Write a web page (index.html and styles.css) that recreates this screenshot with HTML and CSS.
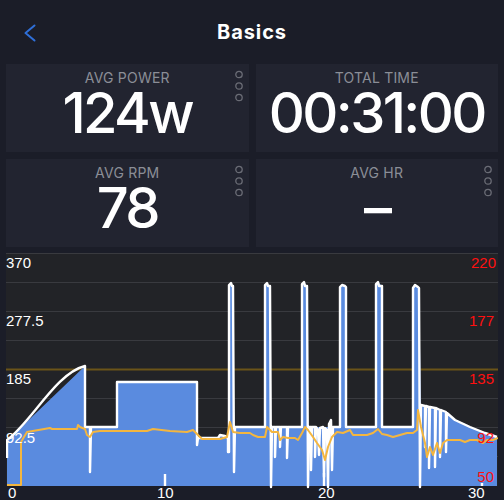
FILE: index.html
```html
<!DOCTYPE html>
<html lang="en">
<head>
  <meta charset="UTF-8" />
  <title>Basics</title>
  <meta name="viewport" content="width=device-width, initial-scale=1" />
  <link rel="stylesheet" href="styles.css">
</head>
<body>
  <div class="topbar">
    <div class="topbar-side">
      <a class="back" href="#" aria-label="Back">
        <svg width="12" height="18" viewBox="0 0 12 18" aria-hidden="true">
          <polyline points="10.5,1.5 1.5,9 10.5,16.5" />
        </svg>
      </a>
    </div>
    <h1 class="title">Basics</h1>
    <div class="topbar-side"></div>
  </div>

  <div class="stats">
    <div class="stat">
      <p class="stat-label">AVG POWER</p>
      <p class="stat-value">124w</p>
      <svg class="stat-menu" width="10" height="34" viewBox="0 0 10 34" aria-hidden="true">
        <circle cx="5" cy="4.5" r="3.2" /><circle cx="5" cy="16" r="3.2" /><circle cx="5" cy="27.5" r="3.2" />
      </svg>
    </div>
    <div class="stat">
      <p class="stat-label">TOTAL TIME</p>
      <p class="stat-value">00:31:00</p>
    </div>
    <div class="stat">
      <p class="stat-label">AVG RPM</p>
      <p class="stat-value">78</p>
      <svg class="stat-menu" width="10" height="34" viewBox="0 0 10 34" aria-hidden="true">
        <circle cx="5" cy="4.5" r="3.2" /><circle cx="5" cy="16" r="3.2" /><circle cx="5" cy="27.5" r="3.2" />
      </svg>
    </div>
    <div class="stat">
      <p class="stat-label">AVG HR</p>
      <p class="stat-value">–</p>
      <svg class="stat-menu" width="10" height="34" viewBox="0 0 10 34" aria-hidden="true">
        <circle cx="5" cy="4.5" r="3.2" /><circle cx="5" cy="16" r="3.2" /><circle cx="5" cy="27.5" r="3.2" />
      </svg>
    </div>
  </div>

  <!-- power / cadence chart, coordinates are page pixels -->
  <div class="chart">
    <svg width="492" height="247" viewBox="6 253 492 247">
      <rect class="plot-bg" x="6" y="253" width="492" height="233" />
      <g class="grid">
        <line x1="6" y1="253.5" x2="498" y2="253.5" />
        <line x1="6" y1="282.5" x2="498" y2="282.5" />
        <line x1="6" y1="311.5" x2="498" y2="311.5" />
        <line x1="6" y1="340.5" x2="498" y2="340.5" />
        <line x1="6" y1="398.5" x2="498" y2="398.5" />
        <line x1="6" y1="427.5" x2="498" y2="427.5" />
        <line x1="6" y1="456.5" x2="498" y2="456.5" />
      </g>
      <line class="ftp" x1="6" y1="369.5" x2="498" y2="369.5" />

      <path class="power-fill" d="M7,486 L7,440 L12,436 L85,366 L85,427 L117,427 L117,382 L197,382 L197,438 L218,438 L220,435 L225,436 L228,438 L229,452 L229,285 L231,283 L233,286 L234,427 L265,427 L265,285 L267,283 L270,286 L271,427 L302,427 L302,284 L304,282 L307,286 L308,427 L340,427 L340,287 L342,285 L346,287 L346,427 L376,427 L376,284 L378,282 L382,286 L382,427 L413,427 L413,288 L415,285 L419,288 L421,405 L435,408 L446,412 L455,420 L470,427 L485,433 L497,437 L497,486 Z" />

      <path class="power-line" d="M7,458 L7,440 C31,423 56,373 85,366 L85,427 L90,427 L90,472 L91,427 L117,427 L117,382 L197,382 L197,445 L198,438 L218,438 L220,435 L225,436 L228,438 L228,452 L229,452 L229,285 L231,283 L232,286 L233,286 L234,472 L235,427 L265,427 L265,285 L267,283 L268,286 L270,286 L271,487 L272,427 L275,427 L275,457 L276,427 L280,427 L280,447 L281,427 L287,427 L287,458 L288,427 L302,427 L302,284 L304,282 L305,286 L307,286 L308,487 L309,427 L311,427 L311,470 L312,427 L315,427 L315,457 L316,427 L318,430 L319,455 L320,428 L323,427 L324,477 L325,428 L327,430 L328,487 L329,424 L331,420 L332,470 L333,427 L340,427 L340,287 L342,285 L345,286 L346,287 L346,427 L376,427 L376,284 L378,282 L379,286 L382,286 L382,427 L413,427 L413,288 L415,285 L418,287 L419,288 L420,487 L421,405 L425,406 L425,447 L426,406 L429,407 L429,468 L430,407 L435,408 L435,467 L436,408 L440,410 L440,457 L441,410 L446,412 L446,452 L447,413 L455,420 L470,427 L485,433 L497,437" />
      <path class="power-line" d="M165,474 L165,486 M324,473 L324,486 M482,483 L482,486" />

      <path class="cadence-line" d="M7,485 L21,485 L21,442 L24,437 L27,432 L50,428 L52,429 L77,429 L78,425 L80,427 L85,429 L87,435 L90,437 L93,432 L100,431 L147,431 L153,429 L170,431 L187,432 L193,430 L198,435 L202,439 L220,439 L227,437 L230,422 L233,432 L240,433 L250,433 L253,435 L258,437 L265,437 L267,427 L272,432 L278,432 L280,440 L283,437 L288,438 L295,438 L298,440 L302,433 L305,427 L308,430 L313,437 L317,443 L322,450 L325,460 L328,447 L332,437 L337,432 L343,433 L350,430 L353,435 L367,435 L373,433 L378,429 L382,434 L387,435 L393,437 L400,435 L407,433 L413,433 L417,430 L418,410 L421,427 L425,443 L427,457 L430,447 L433,455 L437,443 L440,453 L443,443 L447,440 L453,440 L460,440 L465,442 L470,440 L477,440 L483,443 L487,440 L493,440 L498,438" />

      <g class="axis-left">
        <text x="6" y="267.5">370</text>
        <text x="6" y="326">277.5</text>
        <text x="6" y="384">185</text>
        <text x="6" y="443">92.5</text>
      </g>
      <g class="axis-right">
        <text x="496" y="268">220</text>
        <text x="494" y="326">177</text>
        <text x="494" y="384">135</text>
        <text x="494" y="443">92</text>
        <text x="494" y="482">50</text>
      </g>
      <g class="axis-bottom">
        <text x="8" y="498">0</text>
        <text x="157" y="498">10</text>
        <text x="318" y="498">20</text>
        <text x="468" y="498">30</text>
      </g>
    </svg>
  </div>
</body>
</html>
```

FILE: styles.css
```css
* { box-sizing: border-box; }
body {
  margin: 0;
  padding: 0;
  overflow: hidden;
  background: #1b1d28;
  color: #fff;
  font-family: Inter, "Noto Sans", sans-serif;
}

.topbar {
  height: 64px;
  display: grid;
  grid-template-columns: 1fr auto 1fr;
  align-items: center;
}
.topbar-side {
  display: flex;
  align-items: center;
}
.back {
  display: block;
  margin-left: 24px;
  margin-top: 2px;
  line-height: 0;
}
.back svg polyline {
  fill: none;
  stroke: #2f6fd8;
  stroke-width: 2;
  stroke-linecap: round;
  stroke-linejoin: round;
}
.title {
  margin: 0;
  font-size: 20px;
  font-weight: 700;
  letter-spacing: 0.9px;
}

.stats {
  display: grid;
  grid-template-columns: 1fr 1fr;
  gap: 7px;
  padding: 0 6px;
}
.stat {
  position: relative;
  height: 88px;
  background: #222430;
  display: flex;
  flex-direction: column;
  align-items: center;
  padding-top: 6px;
}
.stat-label {
  margin: 0;
  font-size: 14px;
  line-height: 16px;
  color: #8b8e97;
  letter-spacing: 0.2px;
}
.stat-value {
  margin: 0;
  font-size: 56px;
  line-height: 54px;
  font-weight: 500;
  letter-spacing: -2.6px;
}
.stat-menu {
  position: absolute;
  top: 6px;
  right: 5px;
}
.stat-menu circle {
  fill: none;
  stroke: #6a6c75;
  stroke-width: 1.3;
}

.chart {
  margin: 6px 0 0 6px;
  height: 247px;
}
.chart svg { display: block; }
.plot-bg { fill: #222327; }
.grid line {
  stroke: #393a3f;
  stroke-width: 1;
}
.ftp {
  stroke: #6b5419;
  stroke-width: 2;
}
.power-fill { fill: #5a8bdf; }
.power-line {
  fill: none;
  stroke: #fff;
  stroke-width: 2.4;
  stroke-linejoin: round;
}
.cadence-line {
  fill: none;
  stroke: #f4b63f;
  stroke-width: 2;
  stroke-linejoin: round;
}
.chart text {
  font-family: "Liberation Sans", Arial, sans-serif;
  font-size: 15px;
}
.axis-left text,
.axis-bottom text { fill: #fff; }
.axis-right text {
  fill: #ff1010;
  text-anchor: end;
}
```
